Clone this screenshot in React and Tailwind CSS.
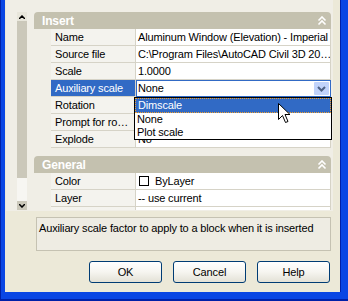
import { useState } from 'react'

const rows = [
  { label: 'Name', value: 'Aluminum Window (Elevation) - Imperial' },
  { label: 'Source file', value: 'C:\\Program Files\\AutoCAD Civil 3D 20…' },
  { label: 'Scale', value: '1.0000' },
  { label: 'Auxiliary scale', value: 'None', active: true },
  { label: 'Rotation', value: '' },
  { label: 'Prompt for ro…', value: '' },
  { label: 'Explode', value: 'No' },
]

function Chevrons() {
  return (
    <svg width="10" height="10" viewBox="0 0 10 10" className="mr-[4px]">
      <path d="M1.5 4.5 L5 1 L8.5 4.5" fill="none" stroke="white" strokeWidth="1.6" />
      <path d="M1.5 8.5 L5 5 L8.5 8.5" fill="none" stroke="white" strokeWidth="1.6" />
    </svg>
  )
}

function Header({ title }) {
  return (
    <div className="h-[17px] rounded-t-[4px] bg-[#C4C1AF] flex items-center justify-between pl-[8px]">
      <span className="font-bold text-white text-[12px] leading-none">{title}</span>
      <Chevrons />
    </div>
  )
}

function Row({ label, value, active, children }) {
  return (
    <div className="relative flex h-[17px] pl-[17px]">
      <div
        className={`w-[85px] border-b border-r border-[#D6D3C7] pl-[4px] leading-[16px] whitespace-nowrap overflow-hidden ${
          active ? 'bg-[#316AC5] text-white' : 'bg-[#F4F3EE]'
        }`}
      >
        {label}
      </div>
      {active ? (
        <div className="flex-1 flex items-center border border-[#316AC5] bg-white pl-[1px]">
          <span className="flex-1 leading-[15px]">{value}</span>
          <div className="w-[15px] h-[13px] mr-[1px] rounded-[1px] bg-[#C1D3FB] flex items-center justify-center">
            <svg width="9" height="6" viewBox="0 0 9 6">
              <path d="M1 1 L4.5 4.5 L8 1" fill="none" stroke="#4D6185" strokeWidth="2" />
            </svg>
          </div>
        </div>
      ) : (
        <div className="flex-1 flex items-center border-b border-r border-[#D6D3C7] bg-white pl-[2px] whitespace-nowrap overflow-hidden leading-[16px]">
          {children || value}
        </div>
      )}
    </div>
  )
}

function DropList() {
  const [sel] = useState('Dimscale')
  return (
    <div className="absolute left-[100px] top-[17px] w-[198px] border border-black bg-white z-10">
      {['Dimscale', 'None', 'Plot scale'].map((o) => (
        <div
          key={o}
          className={`pl-[2px] ${
            o === sel
              ? 'h-[15px] leading-[13px] bg-[#316AC5] text-white border border-dotted border-[#F0A030]'
              : 'h-[13px] leading-[13px]'
          }`}
        >
          {o}
        </div>
      ))}
    </div>
  )
}

function XPButton({ children }) {
  return (
    <button className="w-[73px] h-[22px] rounded-[3px] border border-[#003C74] bg-gradient-to-b from-white via-[#F6F5F0] to-[#E3E1D6] text-black">
      {children}
    </button>
  )
}

export default function App() {
  return (
    <div className="w-[348px] h-[301px] bg-[#0A46E4] border-l border-b-2 border-[#0020A8] flex text-[11px] tracking-[-0.15px] text-black font-['Liberation_Sans',Arial,sans-serif] relative">
      <div className="flex-1 ml-[4px] mr-[7px] mb-[7px] bg-[#ECE9D8] border-r border-[#0020A8] flex flex-col">
        {/* palette */}
        <div className="flex h-[211px] pt-[12px] bg-[#F0EEE6] ml-[1px] mr-[7px]">
          <div className="ml-[11px] w-[10px] h-[198px] flex flex-col">
            <div className="h-[9px] bg-[#E8E6DB] flex items-center justify-center">
              <svg width="6" height="4" viewBox="0 0 6 4">
                <path d="M0 4 L3 1 L6 4" fill="none" stroke="black" strokeWidth="1.5" />
              </svg>
            </div>
            <div className="h-[157px] bg-[#CBC8BA]" />
            <div className="flex-1 bg-[#F7F6F2]" />
            <div className="h-[9px] bg-[#CBC8BA] flex items-center justify-center">
              <svg width="6" height="4" viewBox="0 0 6 4">
                <path d="M0 0 L3 3 L6 0" fill="none" stroke="black" strokeWidth="1.5" />
              </svg>
            </div>
          </div>
          <div className="ml-[7px] w-[297px] h-[199px] overflow-visible flex flex-col">
            <Header title="Insert" />
            {rows.map((r) => (
              <div key={r.label} className="relative">
                <Row {...r} />
                {r.active && <DropList />}
              </div>
            ))}
            <div className="h-[8px]" />
            <Header title="General" />
            <Row label="Color">
              <span className="w-[10px] h-[10px] border border-black bg-white ml-[1px] mr-[6px]" />
              ByLayer
            </Row>
            <Row label="Layer" value="-- use current" />
            <div className="h-[3px] overflow-hidden">
              <Row label="" value="" />
            </div>
          </div>
        </div>

        {/* description */}
        <div className="ml-[31px] mr-[9px] mt-[6px] h-[34px] border border-[#C5C2B2] bg-[#EEECE3] pl-[2px] pt-[4px] leading-[13px] whitespace-nowrap">
          Auxiliary scale factor to apply to a block when it is inserted
        </div>

        {/* buttons */}
        <div className="flex justify-end gap-[11px] pr-[10px] mt-[10px]">
          <XPButton>OK</XPButton>
          <XPButton>Cancel</XPButton>
          <XPButton>Help</XPButton>
        </div>
      </div>

      {/* mouse pointer */}
      <svg className="absolute left-[277px] top-[103px] z-20" width="13" height="21" viewBox="0 0 13 21">
        <path d="M0.5 0.5 L0.5 16.5 L4.5 12.5 L7.5 19.5 L10 18.5 L7 11.5 L12 11.5 Z" fill="white" stroke="black" strokeWidth="1" />
      </svg>
    </div>
  )
}
